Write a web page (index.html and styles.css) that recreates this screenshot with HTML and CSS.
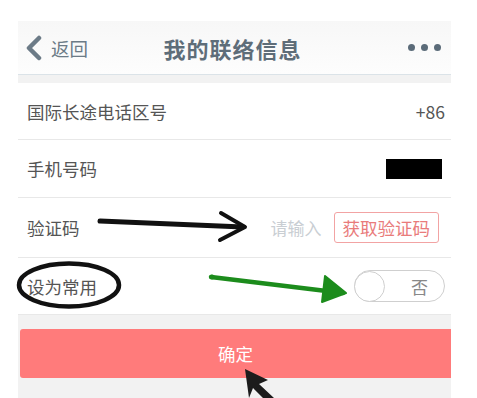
FILE: index.html
```html
<!DOCTYPE html>
<html lang="zh-CN">
<head>
<meta charset="utf-8">
<link rel="stylesheet" href="styles.css">
</head>
<body>
<div class="page">
  <div class="screen">
    <header class="nav">
      <div class="back">
        <svg class="chev" width="20" height="26" viewBox="0 0 20 26"><path d="M15 3 L5 13 L15 23" fill="none" stroke="#6c7b87" stroke-width="4.5" stroke-linecap="round" stroke-linejoin="round"/></svg>
        <span>返回</span>
      </div>
      <div class="title">我的联络信息</div>
      <div class="more"><i></i><i></i><i></i></div>
    </header>
    <div class="band"></div>
    <div class="list">
      <div class="row r1"><span class="label">国际长途电话区号</span><span class="val">+86</span></div>
      <div class="row r2"><span class="label">手机号码</span><span class="redact"></span></div>
      <div class="row r3"><span class="label">验证码</span><span class="right"><span class="ph">请输入</span><span class="code">获取验证码</span></span></div>
      <div class="row r4"><span class="label">设为常用</span><span class="toggle"><span class="knob"></span><span class="no">否</span></span></div>
    </div>
    <div class="foot">
      <div class="btn">确定</div>
    </div>
  </div>
  <svg class="marks" width="477" height="398" viewBox="0 0 477 398">
    <path d="M100 221 L243 227" stroke="#111" stroke-width="5" stroke-linecap="round" fill="none"/>
    <path d="M221 213 L245 227 L220 240" stroke="#111" stroke-width="4" stroke-linecap="round" stroke-linejoin="round" fill="none"/>
    <path d="M211 277 L343 293" stroke="#1c8c1c" stroke-width="4.5" stroke-linecap="round" fill="none"/>
    <circle cx="212" cy="277" r="2.5" fill="#1c8c1c"/>
    <path d="M325 276 L346 293 L322 302 Z" fill="#1c8c1c" stroke="#1c8c1c" stroke-width="2" stroke-linejoin="round"/>
    <ellipse cx="69" cy="285" rx="50" ry="21.5" fill="none" stroke="#111" stroke-width="4.5"/>
    <path d="M245 369 L268 380 L259 384 L274 398 L263 398 L253 388 L249 398 Z" fill="#1c1c1c"/>
  </svg>
</div>
</body>
</html>
```
FILE: styles.css
```css
* { box-sizing: border-box; }
html, body { margin: 0; padding: 0; background: #fff; }
body { font-family: "Noto Sans CJK SC", "Noto Sans", sans-serif; }
.page { position: relative; width: 477px; height: 398px; overflow: hidden; padding-top: 21px; }
.screen { margin-left: 18px; width: 433px; }
.nav {
  height: 54px;
  display: flex; align-items: center; justify-content: space-between;
  background: linear-gradient(#f7f7f7, #fdfdfd);
  border-bottom: 1px solid #dbe3e8;
  padding: 0 10px 0 6px;
}
.back { display: flex; align-items: center; width: 90px; color: #6c7b87; font-size: 18.5px; }
.chev { margin-right: 7px; }
.title { font-size: 22px; font-weight: bold; color: #5e6d79; letter-spacing: 1px; }
.more { width: 90px; display: flex; justify-content: flex-end; gap: 6px; }
.more i { width: 7px; height: 7px; border-radius: 50%; background: #5b6b79; display: block; }
.band { height: 8px; background: #f2f2f2; }
.list { background: #fff; }
.row {
  display: flex; align-items: center; justify-content: space-between;
  border-bottom: 1px solid #e8e8e8;
  padding: 0 6px 0 9px;
  font-size: 17.5px; color: #555;
}
.r1 { height: 57px; }
.r2 { height: 58px; }
.r3 { height: 60px; }
.r4 { height: 57px; }
.val { color: #555; }
.redact { width: 56px; height: 20px; background: #000; margin-right: 3px; }
.right { display: flex; align-items: center; }
.ph { color: #c9ced3; font-size: 17px; margin-right: 12px; }
.code {
  border: 1px solid #f2a3a3; border-radius: 3px; color: #e97b7b;
  font-size: 17.5px; padding: 0 8px; height: 31px; line-height: 29px; margin-right: 6px;
}
.toggle {
  width: 91px; height: 32px; border: 1px solid #cfcfcf; border-radius: 16px;
  display: flex; align-items: center; justify-content: space-between; padding: 0 16px 0 0;
}
.knob { width: 31px; height: 31px; border-radius: 50%; border: 1px solid #cfcfcf; margin-left: -1px; background: #fff; }
.no { color: #888; font-size: 17px; }
.foot { background: #f2f2f2; padding: 14px 0 40px 2px; }
.btn {
  height: 49px; background: #ff7b7b; border-radius: 3px 0 0 3px;
  display: flex; align-items: center; justify-content: center;
  color: #fff; font-size: 17.5px;
}
.marks { position: absolute; left: 0; top: 0; }
```
